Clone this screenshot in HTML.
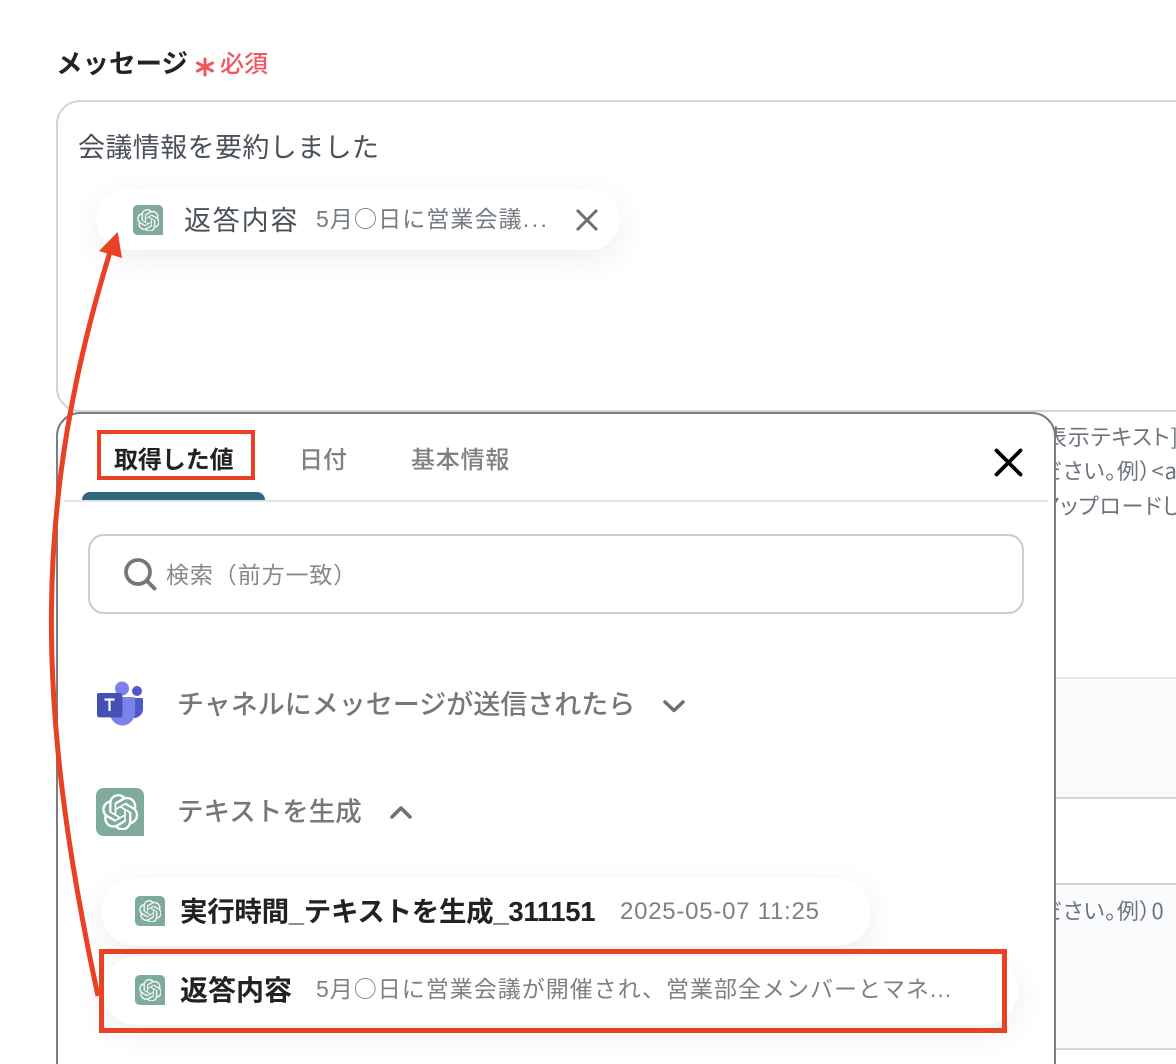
<!DOCTYPE html>
<html lang="ja"><head><meta charset="utf-8"><title>メッセージ</title>
<style>
html,body{margin:0;padding:0;background:#fff}
#p{position:relative;width:1176px;height:1064px;overflow:hidden;background:#fff;font-family:"Liberation Sans","Noto Sans CJK JP",sans-serif}
.t{position:absolute;white-space:nowrap;line-height:40px;height:40px}
.a{position:absolute}
.c{font-family:"Noto Sans CJK JP",sans-serif;line-height:1}
.r{font-size:22px;letter-spacing:.8px;color:#6d747c;font-family:"Noto Sans CJK JP",sans-serif;font-feature-settings:"palt"}
.gpt{position:absolute;background:#7fab9b;border-radius:16% 16% 0 16%;display:block}
.gpt svg{position:absolute;left:12%;top:12%;width:76%;height:76%;display:block}
.sm svg{opacity:.88}
.chip{position:absolute;background:#fff;border-radius:36px;box-shadow:0 8px 32px rgba(0,0,0,.075)}
</style></head><body>
<div id="p">
<svg width="0" height="0" style="position:absolute"><defs><symbol id="k" viewBox="0 0 24 24"><path fill="#fff" d="M22.2819 9.8211a5.9847 5.9847 0 0 0-.5157-4.9108 6.0462 6.0462 0 0 0-6.5098-2.9A6.0651 6.0651 0 0 0 4.9807 4.1818a5.9847 5.9847 0 0 0-3.9977 2.9 6.0462 6.0462 0 0 0 .7427 7.0966 5.98 5.98 0 0 0 .511 4.9107 6.051 6.051 0 0 0 6.5146 2.9001A5.9847 5.9847 0 0 0 13.2599 24a6.0557 6.0557 0 0 0 5.7718-4.2058 5.9894 5.9894 0 0 0 3.9977-2.9001 6.0557 6.0557 0 0 0-.7475-7.0729zm-9.022 12.6081a4.4755 4.4755 0 0 1-2.8764-1.0408l.1419-.0804 4.7783-2.7582a.7948.7948 0 0 0 .3927-.6813v-6.7369l2.02 1.1686a.071.071 0 0 1 .038.052v5.5826a4.504 4.504 0 0 1-4.4945 4.4944zm-9.6607-4.1254a4.4708 4.4708 0 0 1-.5346-3.0137l.142.0852 4.783 2.7582a.7712.7712 0 0 0 .7806 0l5.8428-3.3685v2.3324a.0804.0804 0 0 1-.0332.0615L9.74 19.9502a4.4992 4.4992 0 0 1-6.1408-1.6464zM2.3408 7.8956a4.485 4.485 0 0 1 2.3655-1.9728V11.6a.7664.7664 0 0 0 .3879.6765l5.8144 3.3543-2.0201 1.1685a.0757.0757 0 0 1-.071 0l-4.8303-2.7865A4.504 4.504 0 0 1 2.3408 7.872zm16.5963 3.8558L13.1038 8.364 15.1192 7.2a.0757.0757 0 0 1 .071 0l4.8303 2.7913a4.4944 4.4944 0 0 1-.6765 8.1042v-5.6772a.79.79 0 0 0-.407-.667zm2.0107-3.0231l-.142-.0852-4.7735-2.7818a.7759.7759 0 0 0-.7854 0L9.409 9.2297V6.8974a.0662.0662 0 0 1 .0284-.0615l4.8303-2.7866a4.4992 4.4992 0 0 1 6.6802 4.66zM8.3065 12.863l-2.02-1.1638a.0804.0804 0 0 1-.038-.0567V6.0742a4.4992 4.4992 0 0 1 7.3757-3.4537l-.142.0805L8.704 5.459a.7948.7948 0 0 0-.3927.6813zm1.0976-2.3654l2.602-1.4998 2.6069 1.4998v2.9994l-2.5974 1.4997-2.6067-1.4997Z"/></symbol></defs></svg>

<!-- background rows on the right -->
<div class="a" style="left:1000px;top:677px;width:176px;height:121px;background:#fafafa;border-top:2px solid #e6e8ea;box-sizing:border-box"></div>
<div class="a" style="left:1000px;top:797px;width:176px;height:2px;background:#d3d7da"></div>
<div class="a" style="left:1000px;top:883px;width:176px;height:167px;background:#fafbfc;border-top:2px solid #d0d5da;border-bottom:2px solid #d0d5da;box-sizing:border-box"></div>

<div class="t r" style="left:1045px;top:416px">表示テキスト]</div>
<div class="t r" style="left:1040px;top:450px">ださい。例）&lt;a</div>
<div class="t r" style="left:1039px;top:485px">アップロードし</div>
<div class="t r" style="left:1040px;top:890px">ださい。例）0</div>

<!-- label -->
<div class="t" style="left:56px;top:44px;font-size:26.500px;font-weight:700;color:#222">メッセージ</div>
<svg class="a" style="left:194px;top:56px" width="22" height="22" viewBox="0 0 22 22"><g stroke="#f0565f" stroke-width="3" stroke-linecap="round"><path d="M11 3V19"/><path d="M3.5 7L18.5 15"/><path d="M18.5 7L3.5 15"/></g></svg>
<div class="t" style="left:220px;top:45px;font-size:24px;font-weight:500;color:#f0565f">必須</div>

<!-- textarea -->
<div class="a" style="left:56px;top:100px;width:1300px;height:312px;box-sizing:border-box;border:2px solid #d0d5da;border-radius:24px;background:#fff"></div>
<div class="t" style="left:78px;top:128px;font-size:27px;letter-spacing:.4px;color:#4a5159">会議情報を要約しました</div>

<!-- top chip -->
<div class="chip" style="left:96px;top:189px;width:524px;height:61px;border-radius:31px"></div>
<span class="gpt sm" style="left:133px;top:205px;width:30px;height:30px"><svg viewBox="0 0 24 24"><use href="#k"/></svg></span>
<div class="t" style="left:184px;top:201px;font-size:27px;letter-spacing:1.800px;color:#4a5159">返答内容</div>
<div class="t" style="left:316px;top:199px;font-size:23px;color:#747b82;letter-spacing:1.100px">5月<span class="c">○</span>日に営業会議<span style="letter-spacing:2.500px">...</span></div>
<svg class="a" style="left:574px;top:207px" width="26" height="26" viewBox="0 0 26 26"><path d="M3 3L23 23M23 3L3 23" stroke="#6e6e6e" stroke-width="3" fill="none"/></svg>

<!-- panel -->
<div class="a" style="left:56px;top:412px;width:1000px;height:700px;box-sizing:border-box;border:2px solid #7d7d7d;border-radius:24px;background:#fff"></div>

<!-- tabs -->
<div class="a" style="left:82px;top:492px;width:183px;height:9px;background:#2f6780;border-radius:8px 8px 0 0"></div>
<div class="a" style="left:64px;top:500px;width:984px;height:2px;background:#e3e3e3"></div>
<div class="a" style="left:97px;top:430px;width:158px;height:50px;box-sizing:border-box;border:4px solid #ea4023"></div>
<div class="t" style="left:114px;top:441px;font-size:24px;font-weight:700;color:#222;letter-spacing:-.1px">取得した値</div>
<div class="t" style="left:299px;top:441px;font-size:24px;font-weight:500;color:#808080">日付</div>
<div class="t" style="left:411px;top:441px;font-size:24px;font-weight:500;color:#808080;letter-spacing:.8px">基本情報</div>
<svg class="a" style="left:993px;top:447px" width="31" height="31" viewBox="0 0 31 31"><path d="M3.500 3.500L27.500 27.500M27.500 3.500L3.500 27.500" stroke="#000" stroke-width="3.800" stroke-linecap="round" fill="none"/></svg>

<!-- search -->
<div class="a" style="left:88px;top:534px;width:936px;height:80px;box-sizing:border-box;border:2px solid #ccc;border-radius:16px"></div>
<svg class="a" style="left:123px;top:557px" width="34" height="34" viewBox="0 0 34 34"><circle cx="15" cy="15" r="12" fill="none" stroke="#777" stroke-width="3.800"/><path d="M24 24L31.500 31.500" stroke="#777" stroke-width="4" stroke-linecap="round"/></svg>
<div class="t" style="left:166px;top:555px;font-size:23px;color:#888;letter-spacing:.9px">検索（前方一致）</div>

<!-- teams -->
<svg class="a" style="left:95px;top:680px" width="50" height="48" viewBox="95 680 50 48">
<circle cx="137" cy="691" r="5" fill="#5059c9"/>
<path d="M129 698H141.500A1.500 1.500 0 0 1 143 699.500V709C143 714 139 718 134 718H129Z" fill="#5059c9"/>
<circle cx="122" cy="688.500" r="7" fill="#7b83eb"/>
<path d="M110 697H133.500A1.500 1.500 0 0 1 135 698.500V712C135 719.500 129.500 725.500 122.500 725.500C116 725.500 110 720 110 713Z" fill="#7b83eb"/>
<rect x="98" y="695" width="25" height="23" rx="2" fill="#3c4290" opacity=".35"/>
<rect x="97" y="693" width="25" height="24" rx="2" fill="#4450b4"/>
<path d="M104.500 699.500H114.500M109.500 699.500V711" stroke="#fff" stroke-width="2.200" fill="none"/>
</svg>
<div class="t" style="left:177px;top:685px;font-size:27px;font-weight:500;color:#777">チャネルにメッセージが送信されたら</div>
<svg class="a" style="left:661px;top:697px" width="26" height="18" viewBox="0 0 26 18"><path d="M4 5L13 13.500L22 5" fill="none" stroke="#707070" stroke-width="3.600" stroke-linecap="round" stroke-linejoin="round"/></svg>

<!-- gpt header -->
<span class="gpt" style="left:96px;top:788px;width:48px;height:48px"><svg viewBox="0 0 24 24"><use href="#k"/></svg></span>
<div class="t" style="left:177px;top:792px;font-size:26.500px;font-weight:500;color:#777">テキストを生成</div>
<svg class="a" style="left:388px;top:803px" width="26" height="18" viewBox="0 0 26 18"><path d="M4 14L13 5L22 14" fill="none" stroke="#707070" stroke-width="3.600" stroke-linecap="round" stroke-linejoin="round"/></svg>

<!-- list chips -->
<div class="chip" style="left:102px;top:878px;width:769px;height:68px;border-radius:34px"></div>
<span class="gpt sm" style="left:135px;top:896px;width:30px;height:30px"><svg viewBox="0 0 24 24"><use href="#k"/></svg></span>
<div class="t" style="left:180px;top:892px;font-size:27.500px;font-weight:700;color:#222;letter-spacing:-.3px">実行時間_テキストを生成_311151</div>
<div class="t" style="left:620px;top:892px;font-size:24px;color:#808080;letter-spacing:.75px">2025-05-07 11:25</div>

<div class="chip" style="left:103px;top:956px;width:915px;height:69px;border-radius:35px"></div>
<span class="gpt sm" style="left:135px;top:975px;width:30px;height:30px"><svg viewBox="0 0 24 24"><use href="#k"/></svg></span>
<div class="t" style="left:180px;top:971px;font-size:28px;font-weight:700;color:#222">返答内容</div>
<div class="t" style="left:316px;top:969px;font-size:23px;color:#808080;letter-spacing:1px">5月<span class="c">○</span>日に営業会議が開催され、営業部全メンバーとマネ...</div>
<div class="a" style="left:99px;top:949px;width:908px;height:84px;box-sizing:border-box;border:5px solid #ea4023"></div>

<!-- arrow -->
<svg class="a" style="left:0;top:0" width="1176" height="1064" viewBox="0 0 1176 1064">
<path d="M98 996C34 700 34 500 110 252" fill="none" stroke="#ea4023" stroke-width="5"/>
<path d="M117.700 232L99 251L122 258Z" fill="#ea4023"/>
</svg>
</div>
</body></html>
